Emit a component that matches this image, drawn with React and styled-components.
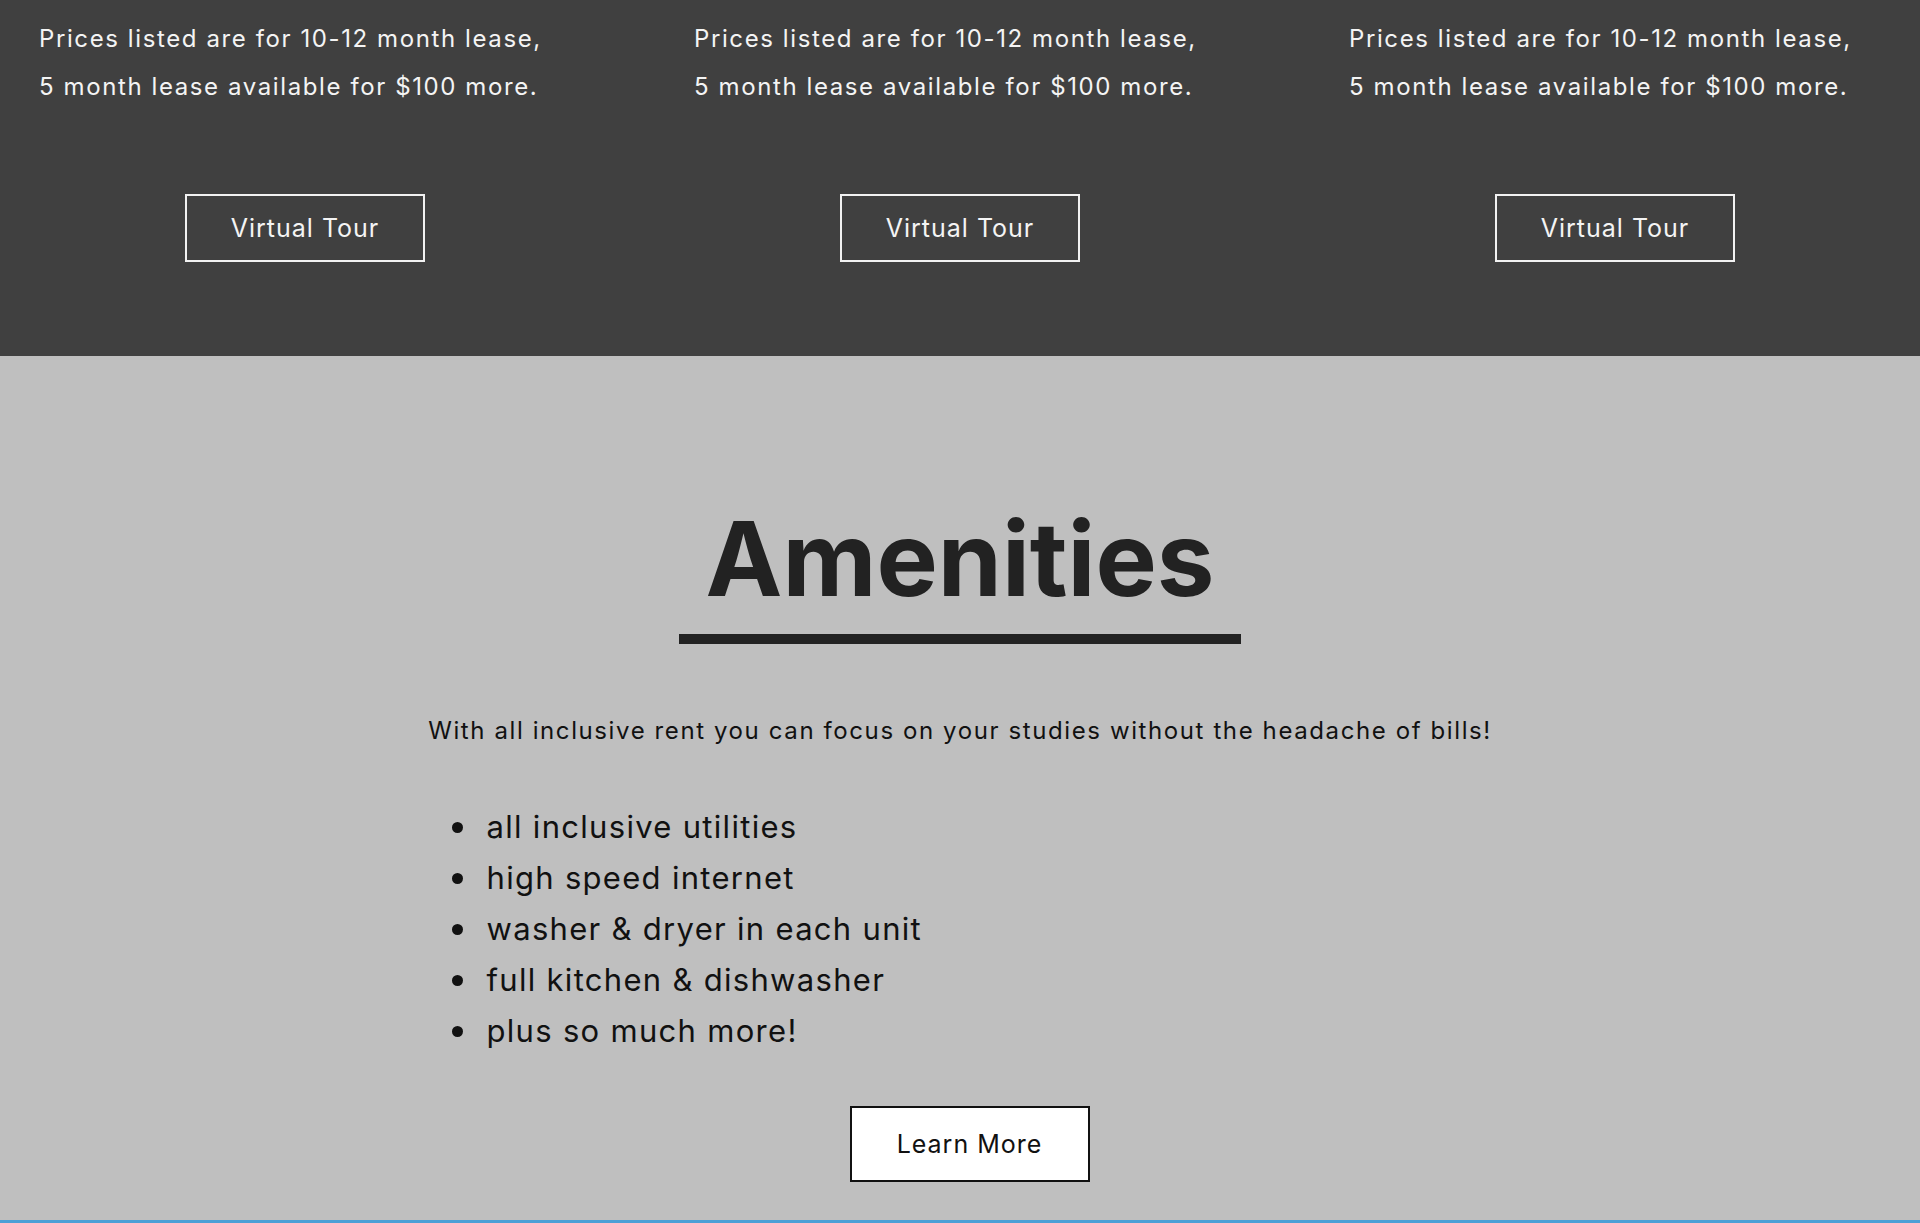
import styled, { createGlobalStyle } from "styled-components";

const GlobalStyle = createGlobalStyle`
  body {
    margin: 0;
    font-family: Inter, "Liberation Sans", sans-serif;
    background: #bfbfbf;
  }
`;

const plans = [1, 2, 3];

const amenities = [
  "all inclusive utilities",
  "high speed internet",
  "washer & dryer in each unit",
  "full kitchen & dishwasher",
  "plus so much more!",
];

const App = () => {
  return (
    <>
      <GlobalStyle />
      <Pricing>
        <div className="grid">
          {plans.map((p) => (
            <div className="col" key={p}>
              <p className="note">
                Prices listed are for 10-12 month lease,
                <br />5 month lease available for $100 more.
              </p>
              <OutlineButton>Virtual Tour</OutlineButton>
            </div>
          ))}
        </div>
      </Pricing>

      <Amenities>
        <h2 className="heading">Amenities</h2>
        <div className="rule" />
        <p className="lead">
          With all inclusive rent you can focus on your studies without the headache of bills!
        </p>
        <ul className="list">
          {amenities.map((a) => (
            <li key={a}>{a}</li>
          ))}
        </ul>
        <div className="buttonRow">
          <SolidButton>Learn More</SolidButton>
        </div>
      </Amenities>

      <NextSection />
    </>
  );
};

const Pricing = styled.section`
  background-color: #404040;
  padding: 15px 0 94px 0;

  .grid {
    display: grid;
    grid-template-columns: repeat(3, 610px);
    column-gap: 45px;
    justify-content: center;
  }

  .col {
    display: flex;
    flex-direction: column;
    align-items: center;
  }

  .note {
    align-self: stretch;
    margin: 0 0 83px 0;
    padding-left: 39px;
    color: #f4f4f4;
    font-size: 24px;
    letter-spacing: 1.6px;
    line-height: 48px;
    white-space: nowrap;
  }
`;

const OutlineButton = styled.button`
  width: 240px;
  height: 68px;
  background: transparent;
  border: 2px solid #f2f2f2;
  color: #f4f4f4;
  font-family: inherit;
  font-size: 25px;
  letter-spacing: 1px;
  cursor: pointer;
`;

const Amenities = styled.section`
  background-color: #bfbfbf;
  padding: 140px 0 38px 0;
  display: flex;
  flex-direction: column;
  align-items: center;

  .heading {
    margin: 0;
    font-size: 103px;
    line-height: 125px;
    font-weight: 700;
    color: #222;
  }

  .rule {
    width: 562px;
    height: 10px;
    margin-top: 13px;
    background-color: #222;
  }

  .lead {
    margin: 70px 0 0 0;
    font-size: 24px;
    letter-spacing: 1.6px;
    line-height: 33px;
    color: #111;
    text-align: center;
  }

  .list {
    width: 1063px;
    box-sizing: border-box;
    margin: 54px 0 0 0;
    padding-left: 58px;
    list-style: none;
    color: #111;
    font-size: 31px;
    letter-spacing: 1.3px;
    line-height: 51px;
  }

  .list li {
    display: flex;
    align-items: center;
  }

  .list li::before {
    content: "";
    width: 11px;
    height: 11px;
    flex-shrink: 0;
    margin: 2px 24px 0 -35px;
    border-radius: 50%;
    background-color: #111;
  }

  .buttonRow {
    display: flex;
    justify-content: center;
    padding-left: 19px;
    margin-top: 50px;
  }
`;

const SolidButton = styled.button`
  width: 240px;
  height: 76px;
  background: #fff;
  border: 2px solid #111;
  color: #111;
  font-family: inherit;
  font-size: 25px;
  letter-spacing: 1px;
  cursor: pointer;
`;

const NextSection = styled.section`
  height: 200px;
  border-top: 3px solid #4d9fd6;
  background: #bfbfbf;
`;

export default App;
